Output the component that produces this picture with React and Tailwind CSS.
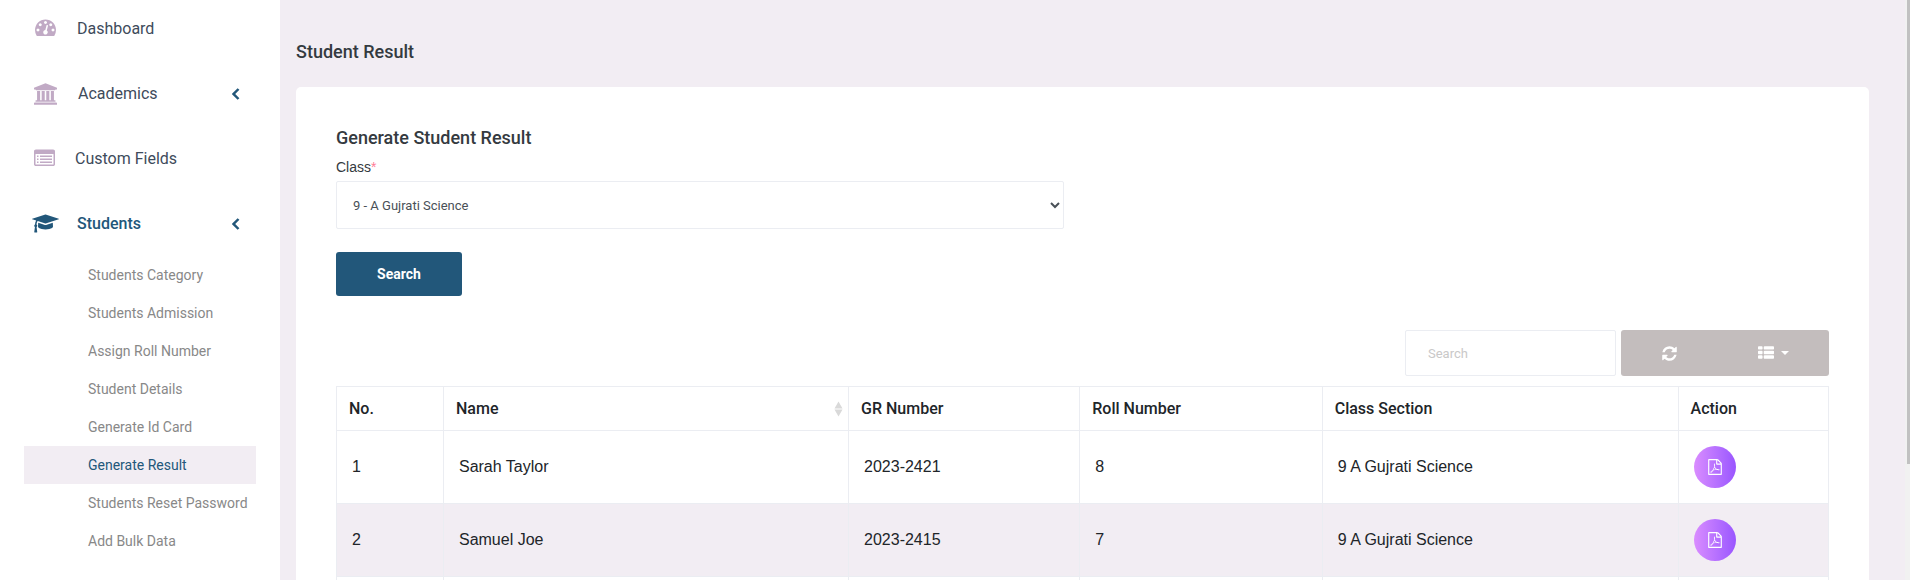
import React from "react";

const TACHOMETER =
  "M384 1152q0-53-37.5-90.5t-90.5-37.5-90.5 37.5-37.5 90.5 37.5 90.5 90.5 37.5 90.5-37.5 37.5-90.5zm192-448q0-53-37.5-90.5t-90.5-37.5-90.5 37.5-37.5 90.5 37.5 90.5 90.5 37.5 90.5-37.5 37.5-90.5zm428 481l101-382q6-26-7.5-48.5t-38.5-29.5-48 6.5-30 39.5l-101 382q-60 5-107 43.5t-63 98.5q-20 77 20 146t117 89 146-20 89-117q16-60-6-117t-72-91zm660-33q0-53-37.5-90.5t-90.5-37.5-90.5 37.5-37.5 90.5 37.5 90.5 90.5 37.5 90.5-37.5 37.5-90.5zm-640-640q0-53-37.5-90.5t-90.5-37.5-90.5 37.5-37.5 90.5 37.5 90.5 90.5 37.5 90.5-37.5 37.5-90.5zm448 192q0-53-37.5-90.5t-90.5-37.5-90.5 37.5-37.5 90.5 37.5 90.5 90.5 37.5 90.5-37.5 37.5-90.5zm320 448q0 261-141 483-19 29-54 29h-1402q-35 0-54-29-141-221-141-483 0-182 71-348t191-286 286-191 348-71 348 71 286 191 191 286 71 348z";
const UNIVERSITY =
  "M960 0l960 384v128h-128q0 26-20.5 45t-48.5 19h-1526q-28 0-48.5-19t-20.5-45h-128v-128zm-704 640h256v768h128v-768h256v768h128v-768h256v768h128v-768h256v768h59q28 0 48.5 19t20.5 45v64h-1664v-64q0-26 20.5-45t48.5-19h59v-768zm1595 960q28 0 48.5 19t20.5 45v128h-1920v-128q0-26 20.5-45t48.5-19h1782z";
const LIST_ALT =
  "M256 1152h128v128h-128zM256 896h128v128h-128zM256 640h128v128h-128zM512 1152h1024v128h-1024zM512 896h1024v128h-1024zM512 640h1024v128h-1024zM1664 1376v-832q0-13-9.500-22.500t-22.500-9.500h-1472q-13 0-22.500 9.500t-9.500 22.500v832q0 13 9.500 22.500t22.500 9.500h1472q13 0 22.500-9.500t9.500-22.500zM1792 288v1088q0 66-47 113t-113 47h-1472q-66 0-113-47t-47-113v-1088q0-66 47-113t113-47h1472q66 0 113 47t47 113z";
const GRADUATION =
  "M1774 836l18 316q4 69-82 128t-235 93.5-323 34.5-323-34.5-235-93.5-82-128l18-316 574 181q22 7 48 7t48-7zm530-324q0 23-22 31l-1120 352q-4 1-10 1t-10-1l-652-206q-43 34-71 111.5t-34 178.5q63 36 63 109 0 69-58 107l58 433q2 14-8 25-9 11-24 11h-192q-15 0-24-11-10-11-8-25l58-433q-58-38-58-107 0-73 65-111 11-207 98-330l-333-104q-22-8-22-31t22-31l1120-352q4-1 10-1t10 1l1120 352q22 8 22 31z";
const REFRESH =
  "M1639 1056q0 5-1 7-64 268-268 434.5t-478 166.5q-146 0-282.5-55t-243.500-157l-129 129q-19 19-45 19t-45-19-19-45v-448q0-26 19-45t45-19h448q26 0 45 19t19 45-19 45l-137 137q71 66 161 102t187 36q134 0 250-65t186-179q11-17 53-117 8-23 30-23h192q13 0 22.500 9.500t9.500 22.500zm25-800v448q0 26-19 45t-45 19h-448q-26 0-45-19t-19-45 19-45l138-138q-148-137-349-137-134 0-250 65t-186 179q-11 17-53 117-8 23-30 23h-199q-13 0-22.500-9.500t-9.500-22.500v-7q65-268 270-434.500t480-166.500q146 0 284 55.500t245 156.500l130-129q19-19 45-19t45 19 19 45z";
const TH_LIST =
  "M512 1248v192q0 40-28 68t-68 28h-320q-40 0-68-28t-28-68v-192q0-40 28-68t68-28h320q40 0 68 28t28 68zm0-512v192q0 40-28 68t-68 28h-320q-40 0-68-28t-28-68v-192q0-40 28-68t68-28h320q40 0 68 28t28 68zm1280 512v192q0 40-28 68t-68 28h-960q-40 0-68-28t-28-68v-192q0-40 28-68t68-28h960q40 0 68 28t28 68zm-1280-1024v192q0 40-28 68t-68 28h-320q-40 0-68-28t-28-68v-192q0-40 28-68t68-28h320q40 0 68 28t28 68zm1280 512v192q0 40-28 68t-68 28h-960q-40 0-68-28t-28-68v-192q0-40 28-68t68-28h960q40 0 68 28t28 68zm0-512v192q0 40-28 68t-68 28h-960q-40 0-68-28t-28-68v-192q0-40 28-68t68-28h960q40 0 68 28t28 68z";
const FILE_PDF =
  "M1596 380q28 28 48 76t20 88v1152q0 40-28 68t-68 28h-1344q-40 0-68-28t-28-68v-1600q0-40 28-68t68-28h896q40 0 88 20t76 48zm-444-244v376h376q-10-29-22-41l-313-313q-12-12-41-22zm384 1528v-1024h-416q-40 0-68-28t-28-68v-416h-768v1536h1280zm-514-593q33 26 84 56 59-7 117-7 147 0 177 49 16 22 2 52 0 1-1 2l-2 2v1q-6 38-71 38-48 0-115-20t-130-53q-221 24-392 83-153 262-242 262-15 0-28-7l-24-12q-1-1-6-5-10-10-6-36 9-40 56-91.500t132-96.500q14-9 23 6 2 2 2 4 52-85 107-197 68-136 104-262-24-82-30.500-159.500t6.500-127.500q11-40 42-40h22q23 0 35 15 18 21 9 68-2 6-4 8 1 3 1 8v30q-2 123-14 192 55 164 146 238zm-576 411q52-24 137-158-51 40-87.500 84t-49.500 74zm398-920q-15 42-2 132 1-7 7-44 0-3 7-43 1-4 4-8-1-1-1-2-1-2-1-3-1-22-13-36 0 1-1 2v2zm-124 661q135-54 284-81-2-1-13-9.500t-16-13.500q-76-67-127-176-27 86-83 197-30 56-45 83zm646-16q-24-24-140-24 76 28 124 28 14 0 18-1 0-1-2-3z";

function Icon({ path, box = "0 0 1792 1792", className }) {
  return (
    <svg viewBox={box} className={className} fill="currentColor" aria-hidden="true">
      <path d={path} />
    </svg>
  );
}

function Chevron() {
  return (
    <svg viewBox="0 0 8 12" className="h-3 w-2" fill="none" stroke="currentColor" strokeWidth="2.5" aria-hidden="true">
      <path d="M6.500 1L1.600 6l4.900 5" />
    </svg>
  );
}

function MenuLink({ label, path, box, iconClass, gap, active, expandable }) {
  return (
    <a href="#" className={`flex h-[65px] items-center pr-10 pl-[34px] text-base ${active ? "font-medium text-[#22577a]" : "text-[#3e4b5b]"}`}>
      <span className={`flex items-center ${gap}`}>
        <Icon path={path} box={box} className={`${iconClass} ${active ? "text-[#22577a]" : "text-[#c1aac5]"}`} />
        {label}
      </span>
      {expandable && (
        <span className="ml-auto text-[#22577a]">
          <Chevron />
        </span>
      )}
    </a>
  );
}

const studentLinks = [
  "Students Category",
  "Students Admission",
  "Assign Roll Number",
  "Student Details",
  "Generate Id Card",
  "Generate Result",
  "Students Reset Password",
  "Add Bulk Data",
];

const rows = [
  { no: 1, name: "Sarah Taylor", gr: "2023-2421", roll: 8, section: "9 A Gujrati Science" },
  { no: 2, name: "Samuel Joe", gr: "2023-2415", roll: 7, section: "9 A Gujrati Science" },
];

function Sidebar() {
  return (
    <nav className="w-[280px] shrink-0 bg-white">
      <div className="-mt-1">
        <MenuLink label="Dashboard" path={TACHOMETER} box="0 128 1792 1792" iconClass="ml-px size-[21px]" gap="gap-[21px]" />
        <MenuLink label="Academics" path={UNIVERSITY} box="0 0 1920 1792" iconClass="h-[22px] w-[23px]" gap="gap-[21px]" expandable />
        <MenuLink label="Custom Fields" path={LIST_ALT} iconClass="size-[21px]" gap="gap-5" />
        <MenuLink label="Students" path={GRADUATION} box="0 0 2304 1792" iconClass="-ml-0.5 h-[21px] w-[27px]" gap="gap-[18px]" active expandable />
      </div>
      <ul className="px-6 text-sm">
        {studentLinks.map((label) => {
          const current = label === "Generate Result";
          return (
            <li key={label}>
              <a
                href="#"
                aria-current={current ? "page" : undefined}
                className={`flex h-[38px] items-center pl-16 whitespace-nowrap ${current ? "bg-[#f2edf3] text-[#22577a]" : "text-[#888888]"}`}
              >
                {label}
              </a>
            </li>
          );
        })}
      </ul>
    </nav>
  );
}

function SearchForm() {
  return (
    <form onSubmit={(e) => e.preventDefault()} className="flex flex-col items-start">
      <h2 className="text-lg leading-[22px] font-medium text-[#343a40]">Generate Student Result</h2>
      <label htmlFor="class" className="mt-1.5 font-[Liberation_Sans] text-sm leading-6 text-[#343a40]">
        Class<span className="text-[#fe7c96]">*</span>
      </label>
      <select
        id="class"
        className="mt-0.5 h-12 w-1/2 max-w-[728px] rounded-xs border border-[#ebedf2] bg-white px-3 text-[13px] text-[#495057]"
      >
        <option>9 - A Gujrati Science</option>
      </select>
      <button type="submit" className="mt-[23px] h-11 w-[126px] rounded-[3px] bg-[#22577a] text-sm font-bold text-white">
        Search
      </button>
    </form>
  );
}

function Toolbar() {
  return (
    <div className="flex justify-end gap-[5px]">
      <input
        type="search"
        aria-label="Search results"
        placeholder="Search"
        className="h-[46px] w-[211px] rounded-xs border border-[#ebedf2] px-[22px] text-[13px] placeholder:text-[#c9c8c8]"
      />
      <div className="flex h-[46px] w-52 overflow-hidden rounded-[3px] bg-[#c3bdbd] text-white">
        <button type="button" aria-label="Refresh" className="flex w-24 items-center justify-center">
          <Icon path={REFRESH} className="size-[17px]" />
        </button>
        <button type="button" aria-label="Columns" className="flex flex-1 items-center justify-center gap-[7px]">
          <Icon path={TH_LIST} className="size-4" />
          <svg viewBox="0 0 8 4" className="h-1 w-2" fill="currentColor" aria-hidden="true">
            <path d="M0 0h8L4 4z" />
          </svg>
        </button>
      </div>
    </div>
  );
}

function ResultTable() {
  const th = "border border-[#ebedf2] px-3 text-left font-medium";
  const td = "border border-[#ebedf2] px-[15px]";
  return (
    <table className="mt-2.5 w-full table-fixed border-collapse text-base text-[#212529]">
      <colgroup>
        <col className="w-[7.17%]" />
        <col className="w-[27.15%]" />
        <col className="w-[15.5%]" />
        <col className="w-[16.25%]" />
        <col className="w-[23.85%]" />
        <col />
      </colgroup>
      <thead>
        <tr className="h-11">
          <th className={th}>No.</th>
          <th className="border border-[#ebedf2] pr-[5px] pl-3 text-left font-medium">
            <span className="flex items-center justify-between">
              Name
              <svg viewBox="0 0 9 16" className="h-4 w-[9px]" fill="#d9d9d9" aria-hidden="true">
                <path d="M4.500 0.500L8.500 7.500h-8zM4.500 15.500L0.500 8.500h8z" />
              </svg>
            </span>
          </th>
          <th className={th}>GR Number</th>
          <th className={th}>Roll Number</th>
          <th className={th}>Class Section</th>
          <th className={th}>Action</th>
        </tr>
      </thead>
      <tbody className="font-[Liberation_Sans]">
        {rows.map((row) => (
          <tr key={row.no} className="h-[73px] even:bg-[#f2edf3]">
            <td className={td}>{row.no}</td>
            <td className={td}>{row.name}</td>
            <td className={td}>{row.gr}</td>
            <td className={td}>{row.roll}</td>
            <td className={td}>{row.section}</td>
            <td className={td}>
              <a
                href="#"
                aria-label={`Result PDF for ${row.name}`}
                className="flex size-[42px] items-center justify-center rounded-full bg-linear-to-r from-[#da8cff] to-[#9a55ff] text-white"
              >
                <Icon path={FILE_PDF} className="size-4" />
              </a>
            </td>
          </tr>
        ))}
        <tr className="h-[73px]">
          <td className={td} />
          <td className={td} />
          <td className={td} />
          <td className={td} />
          <td className={td} />
          <td className={td} />
        </tr>
      </tbody>
    </table>
  );
}

export default function App() {
  return (
    <div className="flex h-screen overflow-hidden bg-[#f2edf3] font-[Roboto,sans-serif]">
      <Sidebar />
      <main className="min-w-0 flex-1 pt-10 pr-9 pl-4">
        <h1 className="text-lg leading-6 font-medium text-[#343a40]">Student Result</h1>
        <section className="mt-[23px] rounded-[5px] bg-white p-10">
          <SearchForm />
          <div className="mt-[34px]">
            <Toolbar />
            <ResultTable />
          </div>
        </section>
      </main>
      <div className="w-[5px] shrink-0 bg-[#f1f1f1] pl-0.5">
        <div className="h-4/5 bg-[#c1c1c1]" />
      </div>
    </div>
  );
}
